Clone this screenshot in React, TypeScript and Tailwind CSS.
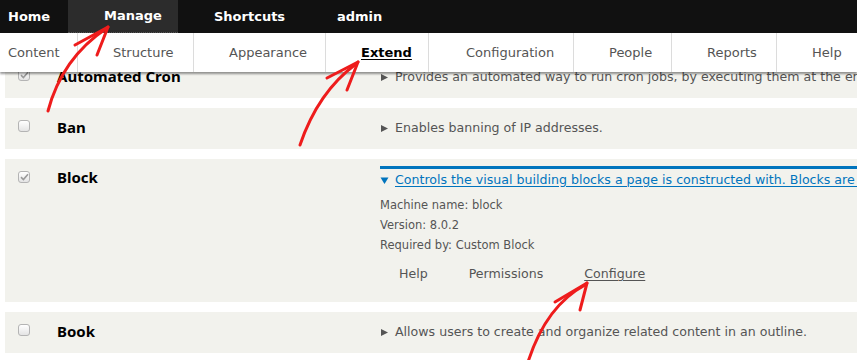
const topItems = [
  { label: 'Home', w: 'w-[68px] pl-2' },
  { label: 'Manage', w: 'w-[110px] pl-[36px] bg-[#2c2c2c] border-b border-dotted border-[#555]', active: true },
  { label: 'Shortcuts', w: 'w-[123px] pl-[36px]' },
  { label: 'admin', w: 'w-[120px] pl-[36px]' },
];

const tabs = [
  { label: 'Content', w: 'w-[77px] pl-2' },
  { label: 'Structure', w: 'w-[116px] pl-[35px] border-l' },
  { label: 'Appearance', w: 'w-[132px] pl-[35px] border-l' },
  { label: 'Extend', w: 'w-[103px] pl-[35px] border-l', active: true },
  { label: 'Configuration', w: 'w-[145px] pl-[37px] border-l' },
  { label: 'People', w: 'w-[98px] pl-[35px] border-l' },
  { label: 'Reports', w: 'w-[105px] pl-[35px] border-l' },
  { label: 'Help', w: 'w-[90px] pl-[35px] border-l' },
];

const Checkbox = ({ checked }: { checked?: boolean }) => (
  <div className="mt-[12px] ml-[13px] w-[12px] h-[12px] rounded-[3px] border border-[#b4b4b4] bg-gradient-to-b from-white to-[#e4e4e4] flex items-center justify-center">
    {checked && (
      <svg width="9" height="8" viewBox="0 0 9 8">
        <path d="M1 4.2 L3.4 6.5 L8 1.2" fill="none" stroke="#9a9a9a" strokeWidth="1.6" />
      </svg>
    )}
  </div>
);

const Tri = () => (
  <svg width="9" height="9" viewBox="0 0 9 9" className="mr-[6px] shrink-0">
    <path d="M1 1 L8 4.5 L1 8 Z" fill="#555" />
  </svg>
);

const Row = ({ name, desc, checked }: { name: string; desc: string; checked?: boolean }) => (
  <div className="ml-[5px] h-[41px] bg-[#f2f2ed] grid grid-cols-[52px_323px_1fr] items-start">
    <Checkbox checked={checked} />
    <div className="pt-[9px] leading-[20px] text-[15px] font-bold text-black font-['Noto_Sans',sans-serif]">{name}</div>
    <div className="pt-[10px] leading-[20px] flex items-center text-[12.6px] text-[#555] whitespace-nowrap">
      <Tri />
      {desc}
    </div>
  </div>
);

const Arrow = ({ d, b1, b2 }: { d: string; b1: string; b2: string }) => (
  <g fill="none" stroke="#ee1c1c" strokeWidth="3" strokeLinecap="round" strokeLinejoin="round">
    <path d={d} />
    <path d={b1} />
    <path d={b2} />
  </g>
);

export default function App() {
  return (
    <div className="relative w-[857px] h-[360px] overflow-hidden bg-white font-['DejaVu_Sans',sans-serif]">
      <div className="relative z-10 shadow-[0_2px_2px_rgba(0,0,0,0.4)]">
        <div className="h-[33px] bg-[#111] flex text-white text-[13px] font-bold">
          {topItems.map((t) => (
            <div key={t.label} className={`h-full flex items-center ${t.w}`}>
              {t.label}
            </div>
          ))}
        </div>
        <div className="h-[39px] bg-white flex text-[13px] text-[#555]">
          {tabs.map((t) => (
            <div key={t.label} className={`h-full flex items-center border-[#dcdcdc] shrink-0 ${t.w}`}>
              {t.active ? <span className="font-bold text-black underline underline-offset-2">{t.label}</span> : t.label}
            </div>
          ))}
        </div>
      </div>

      <div className="-mt-[15px] flex flex-col gap-[10px]">
        <Row name="Automated Cron" checked desc="Provides an automated way to run cron jobs, by executing them at the end of the server response." />
        <Row name="Ban" desc="Enables banning of IP addresses." />

        <div className="ml-[5px] h-[143px] bg-[#f2f2ed] grid grid-cols-[52px_323px_1fr] items-start">
          <Checkbox checked />
          <div className="pt-[8px] leading-[20px] text-[15px] font-bold text-black font-['Noto_Sans',sans-serif]">Block</div>
          <div className="pt-[7px] whitespace-nowrap">
            <div className="border-t-[3px] border-[#0074bd]" />
            <div className="pt-[1px] h-[21px] flex items-center text-[12.6px] text-[#0074bd]">
              <svg width="9" height="9" viewBox="0 0 9 9" className="mr-[6px] shrink-0">
                <path d="M0.5 1.5 L8.5 1.5 L4.5 8 Z" fill="#0074bd" />
              </svg>
              <span className="underline underline-offset-2">
                Controls the visual building blocks a page is constructed with. Blocks are boxes of content rendered into an area, or region, of a web page.
              </span>
            </div>
            <div className="mt-[5px] text-[11.5px] leading-[20px] text-[#555]">
              <div>Machine name: block</div>
              <div>Version: 8.0.2</div>
              <div>Required by: Custom Block</div>
            </div>
            <div className="mt-[9px] ml-[19px] flex gap-[41px] text-[12.6px] leading-[20px] text-[#555]">
              <span>Help</span>
              <span>Permissions</span>
              <span className="underline underline-offset-2">Configure</span>
            </div>
          </div>
        </div>

        <Row name="Book" desc="Allows users to create and organize related content in an outline." />
      </div>

      <svg className="absolute inset-0 z-20 pointer-events-none" width="857" height="360">
        <Arrow d="M48 111 Q62 58 107 28" b1="M75 45 L108 27" b2="M108 27 L97 55" />
        <Arrow d="M300 145 Q318 92 356 64" b1="M327 78 L358 62" b2="M358 62 L347 90" />
        <Arrow d="M528 362 Q546 306 585 285" b1="M555 302 L587 283" b2="M587 283 L580 310" />
      </svg>
    </div>
  );
}
